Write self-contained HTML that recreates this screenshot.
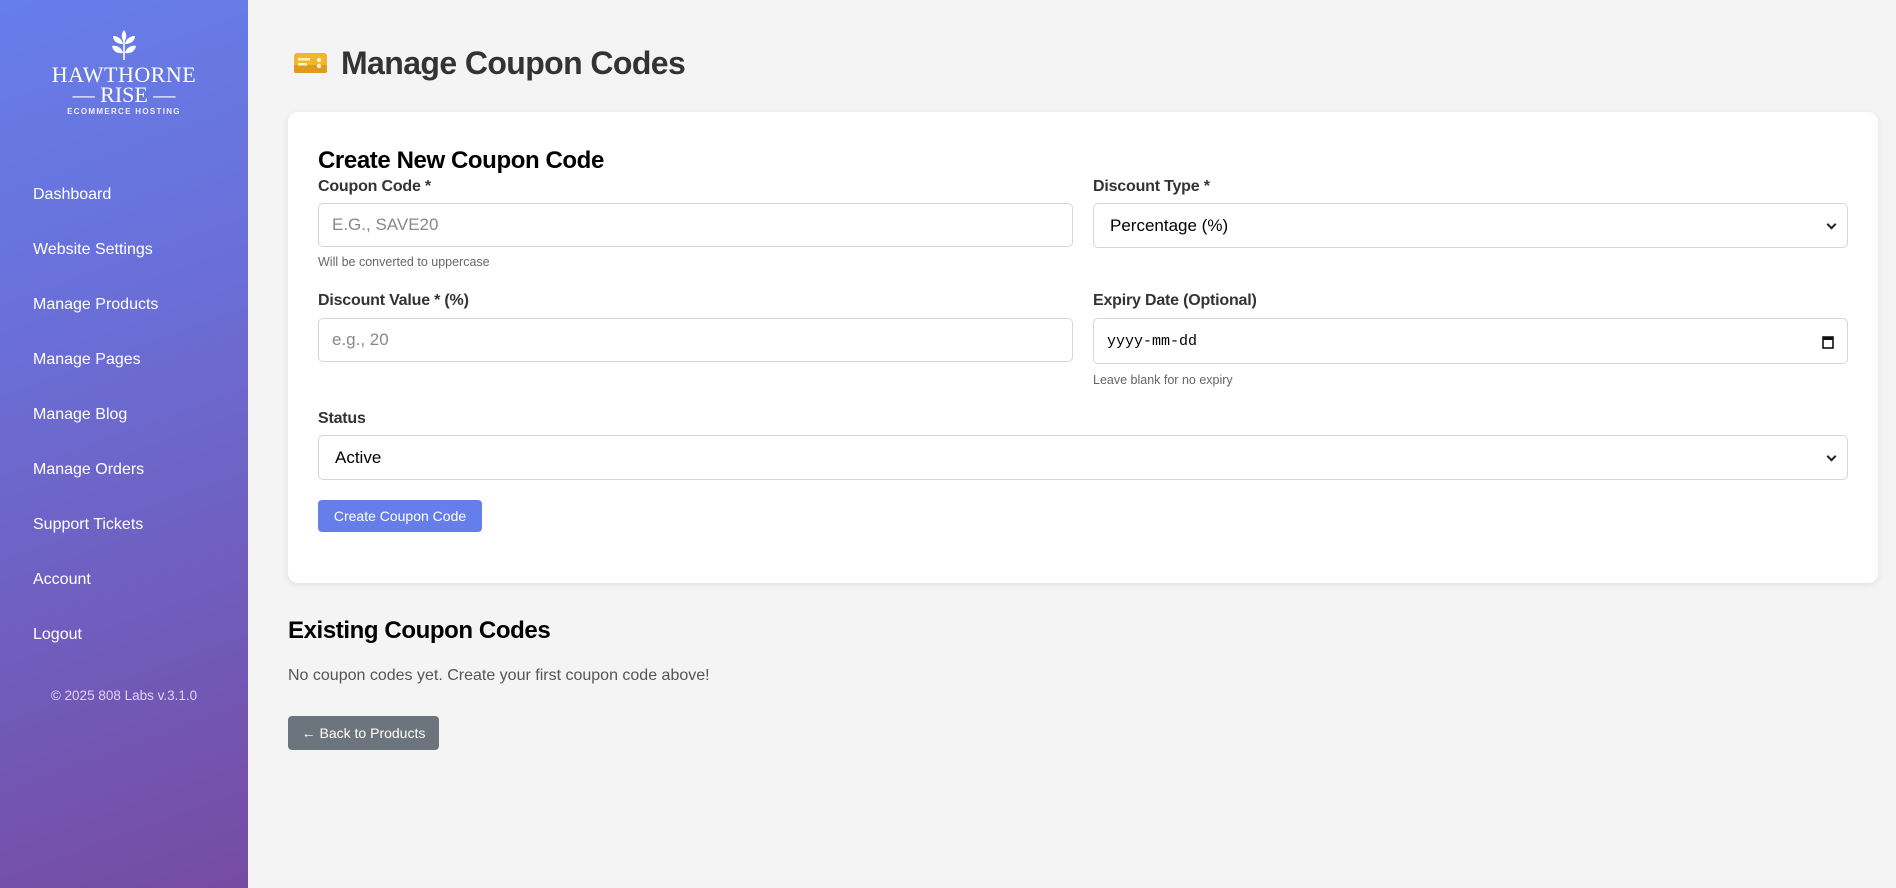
<!DOCTYPE html>
<html><head><meta charset="utf-8"><style>
*{box-sizing:border-box;margin:0;padding:0}
body{width:1896px;height:888px;background:#f4f4f4;font-family:"Liberation Sans",sans-serif;position:relative;overflow:hidden;color:#333}
.sb{position:absolute;left:0;top:0;width:248px;height:888px;background:linear-gradient(160deg,#667eea 0%,#6a6fd8 35%,#764ba2 100%)}
.sb a{position:absolute;left:33px;color:#fff;font-size:16px;text-decoration:none;transform:translateY(-50%)}
.abs{position:absolute}
.lbl{position:absolute;font-size:16px;font-weight:bold;color:#333;transform:translateY(-50%);letter-spacing:-0.2px}
.in{position:absolute;background:#fff;border:1px solid #d6d6d6;border-radius:5px;font-size:17px;display:flex;align-items:center;padding-left:13px}
.help{position:absolute;font-size:12.5px;color:#666;transform:translateY(-50%)}
.chev{position:absolute;right:12px;top:50%;width:7px;height:7px;border-right:2px solid #222;border-bottom:2px solid #222;transform:translateY(-70%) rotate(45deg)}
</style></head><body>
<div class="sb">
 <svg class="abs" style="left:108px;top:28px" width="32" height="34" viewBox="0 0 32 34" fill="#fff">
  <path d="M16 2c3 4 3 8 0 12c-3-4-3-8 0-12z"/>
  <path d="M15 16c-1-5-5-8-10-8c0 5 4 8 10 8z"/>
  <path d="M17 16c1-5 5-8 10-8c0 5-4 8-10 8z"/>
  <path d="M15 25c-1-5-6-8-11-7c1 5 5 8 11 7z"/>
  <path d="M17 25c1-5 6-8 11-7c-1 5-5 8-11 7z"/>
  <rect x="15.2" y="12" width="1.6" height="20"/>
 </svg>
 <div class="abs" style="left:0;width:248px;top:62px;text-align:center;color:#fff;font-family:'Liberation Serif',serif;font-size:22px;letter-spacing:0.5px">HAWTHORNE</div>
 <div class="abs" style="left:0;width:248px;top:82px;text-align:center;color:#fff;font-family:'Liberation Serif',serif;font-size:22px">— RISE —</div>
 <div class="abs" style="left:0;width:248px;top:107px;text-align:center;color:#eef;font-size:8px;font-weight:bold;letter-spacing:1.3px">ECOMMERCE HOSTING</div>
 <a style="top:195px">Dashboard</a>
 <a style="top:250px">Website Settings</a>
 <a style="top:305px">Manage Products</a>
 <a style="top:360px">Manage Pages</a>
 <a style="top:415px">Manage Blog</a>
 <a style="top:470px">Manage Orders</a>
 <a style="top:525px">Support Tickets</a>
 <a style="top:580px">Account</a>
 <a style="top:635px">Logout</a>
 <div class="abs" style="left:0;width:248px;top:688px;text-align:center;color:#dcd6f0;font-size:13.5px">© 2025 808 Labs v.3.1.0</div>
</div>

<svg class="abs" style="left:294px;top:53px" width="33" height="20" viewBox="0 0 33 20"><rect x="0" y="0" width="33" height="20" rx="3" fill="#f2b530"/><rect x="0" y="12" width="33" height="8" rx="2" fill="#e09a1e"/><rect x="4" y="5" width="12" height="2.5" fill="#fff3c8"/><rect x="4" y="10" width="9" height="2.5" fill="#fff3c8"/><circle cx="25" cy="7" r="2.2" fill="#fff3c8"/><circle cx="25" cy="13" r="2.2" fill="#fff3c8"/></svg>
<div class="abs" style="left:341px;top:45px;font-size:32px;font-weight:bold;color:#333;letter-spacing:-0.6px">Manage Coupon Codes</div>

<div class="abs" style="left:288px;top:112px;width:1590px;height:471px;background:#fff;border-radius:10px;box-shadow:0 2px 8px rgba(0,0,0,0.08)"></div>
<div class="abs" style="left:318px;top:147px;font-size:24px;font-weight:bold;color:#000;letter-spacing:-0.4px">Create New Coupon Code</div>

<div class="lbl" style="left:318px;top:187px">Coupon Code *</div>
<div class="in" style="left:318px;top:203px;width:755px;height:44px;color:#888">E.G., SAVE20</div>
<div class="help" style="left:318px;top:262px">Will be converted to uppercase</div>

<div class="lbl" style="left:1093px;top:187px">Discount Type *</div>
<div class="in" style="left:1093px;top:203px;width:755px;height:45px;color:#000;padding-left:16px">Percentage (%)<span class="chev"></span></div>

<div class="lbl" style="left:318px;top:301px">Discount Value * (%)</div>
<div class="in" style="left:318px;top:318px;width:755px;height:44px;color:#888">e.g., 20</div>

<div class="lbl" style="left:1093px;top:301px">Expiry Date (Optional)</div>
<div class="in" style="left:1093px;top:318px;width:755px;height:46px;color:#000;font-family:'Liberation Mono',monospace;font-size:15px">yyyy-mm-dd
 <svg class="abs" style="right:13px;top:16px" width="12" height="14" viewBox="0 0 12 14"><rect x="1" y="2" width="10" height="11" fill="none" stroke="#111" stroke-width="1.6"/><rect x="1" y="2" width="10" height="3" fill="#111"/></svg></div>
<div class="help" style="left:1093px;top:380px">Leave blank for no expiry</div>

<div class="lbl" style="left:318px;top:419px">Status</div>
<div class="in" style="left:318px;top:435px;width:1530px;height:45px;color:#000;padding-left:16px">Active<span class="chev"></span></div>

<div class="abs" style="left:318px;top:500px;width:164px;height:32px;background:#667eea;border-radius:4px;color:#fff;font-size:14px;display:flex;align-items:center;justify-content:center">Create Coupon Code</div>

<div class="abs" style="left:288px;top:617px;font-size:24px;font-weight:bold;color:#000;letter-spacing:-0.4px">Existing Coupon Codes</div>
<div class="abs" style="left:288px;top:667px;font-size:16px;color:#555">No coupon codes yet. Create your first coupon code above!</div>
<div class="abs" style="left:288px;top:716px;width:151px;height:34px;background:#6c757d;border-radius:4px;color:#fff;font-size:14px;display:flex;align-items:center;justify-content:center">← Back to Products</div>
</body></html>
